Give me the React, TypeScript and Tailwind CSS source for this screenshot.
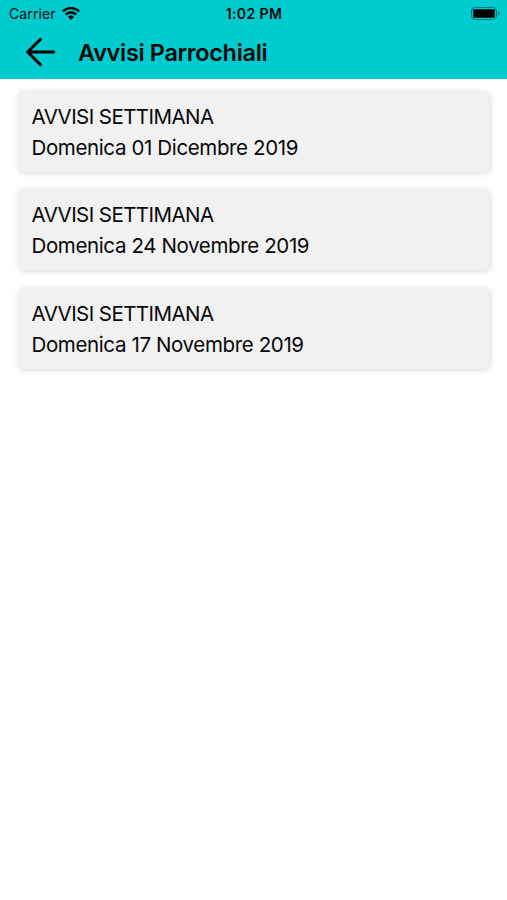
import React from "react";

interface Notice {
  title: string;
  date: string;
}

const notices: Notice[] = [
  { title: "AVVISI SETTIMANA", date: "Domenica 01 Dicembre 2019" },
  { title: "AVVISI SETTIMANA", date: "Domenica 24 Novembre 2019" },
  { title: "AVVISI SETTIMANA", date: "Domenica 17 Novembre 2019" },
];

const WifiIcon = () => (
  <svg width="18" height="14" viewBox="0 0 18 14" fill="none" stroke="#000" strokeWidth="2.4">
    <path d="M0.9 4.4a11.5 11.5 0 0 1 16.2 0" />
    <path d="M3.8 7.6a7.4 7.4 0 0 1 10.4 0" />
    <path d="M9 13.1 6 10a4.3 4.3 0 0 1 6 0z" fill="#000" stroke="none" />
  </svg>
);

const BatteryIcon = () => (
  <svg width="29" height="14" viewBox="0 0 29 14">
    <rect x="0.5" y="0.5" width="25" height="12" rx="3.5" fill="none" stroke="#000" strokeOpacity="0.4" />
    <rect x="2.2" y="2.2" width="21.6" height="8.6" rx="1.2" fill="#000" />
    <path d="M26.8 4.3c2 .8 2 3.5 0 4.3z" fill="#000" fillOpacity="0.4" />
  </svg>
);

const BackIcon = () => (
  <svg
    width="32"
    height="30"
    viewBox="0 0 32 30"
    fill="none"
    stroke="#000"
    strokeWidth="3"
    strokeLinecap="round"
    strokeLinejoin="round"
  >
    <path d="M16.4 2.4 3.6 15l12.8 12.6M3.6 15H29.6" />
  </svg>
);

const StatusBar = () => (
  <div className="grid h-[27px] grid-cols-3 items-center pl-[9px] pr-[7px] text-[14px]">
    <div className="flex items-center gap-[6px]">
      <span className="tracking-[0.1px]">Carrier</span>
      <WifiIcon />
    </div>
    <span className="-ml-px text-center font-semibold tracking-[0.4px]">1:02 PM</span>
    <div className="flex justify-end">
      <BatteryIcon />
    </div>
  </div>
);

const NoticeCard = ({ title, date }: Notice) => (
  <li className="h-[81px] rounded-[5px] bg-[#f1f1f1] px-[13.5px] pt-[10px] text-[20.5px] leading-[31px] shadow-[1px_1px_6px_rgba(0,0,0,0.16)]">
    <p className="tracking-[-0.56px]">{title}</p>
    <p className="tracking-[-0.37px]">{date}</p>
  </li>
);

const App = () => (
  <div className="min-h-screen bg-white font-['Inter',sans-serif] text-[#080808]">
    <header className="h-[79px] bg-[#00cbcf]">
      <StatusBar />
      <div className="flex h-[50px] items-center pl-[24px]">
        <button aria-label="Indietro">
          <BackIcon />
        </button>
        <h1 className="ml-[22px] pt-px text-[23.5px] font-semibold tracking-[-0.34px]">Avvisi Parrochiali</h1>
      </div>
    </header>
    <ul className="flex flex-col gap-[17.5px] px-[18px] pt-[11.5px]">
      {notices.map((notice) => (
        <NoticeCard key={notice.date} {...notice} />
      ))}
    </ul>
  </div>
);

export default App;
